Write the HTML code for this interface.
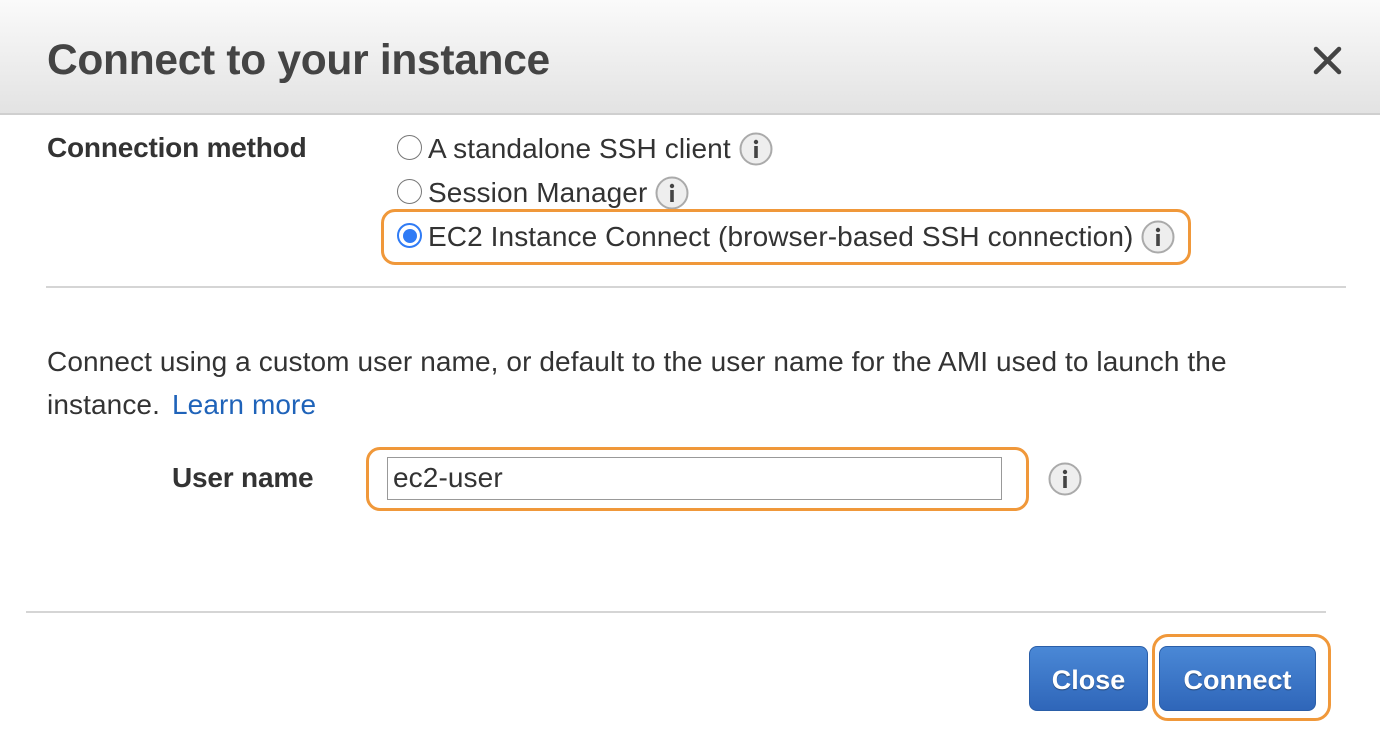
<!DOCTYPE html>
<html><head><meta charset="utf-8"><style>
*{margin:0;padding:0;box-sizing:border-box}
body{width:1380px;height:738px;background:#fff;font-family:"Liberation Sans",Arial,sans-serif;color:#333;position:relative;overflow:hidden}
.hdr{position:absolute;left:0;top:0;width:1380px;height:115px;background:linear-gradient(#fafafa,#e3e3e3);border-bottom:2px solid #cfcfcf}
.t{position:absolute;white-space:nowrap}
.title{left:47px;top:37px;font-size:42.5px;font-weight:bold;color:#444;letter-spacing:-0.3px}
.lbl{font-size:28px;font-weight:bold;color:#333;letter-spacing:-0.2px}
.txt{font-size:28px;color:#333;letter-spacing:0.1px;line-height:32px;display:flex;align-items:center}
.radio{position:absolute;width:25px;height:25px;border-radius:50%;border:1.5px solid #777;background:#fff}
.radio.on{border:2px solid #2f7bf5}
.radio.on::after{content:"";position:absolute;left:3.5px;top:3.5px;width:14px;height:14px;border-radius:50%;background:#2f7bf5}
.info{width:34px;height:34px;flex:none}
.ob{position:absolute;border:3px solid #f0983a;border-radius:14px}
.line{position:absolute;height:2px;background:#d5d5d5}
.btn{position:absolute;top:646px;height:65px;border-radius:8px;background:linear-gradient(#4a88d6,#2f66b9);border:1px solid #2a5ea8;color:#fff;font-weight:bold;font-size:27px;text-align:center;line-height:66px;text-shadow:0 1px 1px rgba(0,0,0,.4)}
</style></head><body>
<div class="hdr"></div>
<div class="t title">Connect to your instance</div>
<svg style="position:absolute;left:1313px;top:46px" width="29" height="29" viewBox="0 0 29 29"><path d="M3 3L26 26M26 3L3 26" stroke="#444" stroke-width="4.5" stroke-linecap="round"/></svg>

<div class="t lbl" style="left:47px;top:132px">Connection method</div>
<div class="radio" style="left:397px;top:135px"></div>
<div class="t txt" style="left:428px;top:132px">A standalone SSH client&nbsp;<svg class="info" viewBox="0 0 34 34"><circle cx="17" cy="17" r="15.5" fill="#eee" stroke="#aaa" stroke-width="2"/><circle cx="17" cy="10" r="2.2" fill="#444"/><rect x="15.2" y="14" width="3.6" height="12" fill="#444"/></svg></div>
<div class="radio" style="left:397px;top:179px"></div>
<div class="t txt" style="left:428px;top:176px">Session Manager&nbsp;<svg class="info" viewBox="0 0 34 34"><circle cx="17" cy="17" r="15.5" fill="#eee" stroke="#aaa" stroke-width="2"/><circle cx="17" cy="10" r="2.2" fill="#444"/><rect x="15.2" y="14" width="3.6" height="12" fill="#444"/></svg></div>
<div class="ob" style="left:381px;top:209px;width:810px;height:56px"></div>
<div class="radio on" style="left:397px;top:223px"></div>
<div class="t txt" style="left:428px;top:220px">EC2 Instance Connect (browser-based SSH connection)&nbsp;<svg class="info" viewBox="0 0 34 34"><circle cx="17" cy="17" r="15.5" fill="#eee" stroke="#aaa" stroke-width="2"/><circle cx="17" cy="10" r="2.2" fill="#444"/><rect x="15.2" y="14" width="3.6" height="12" fill="#444"/></svg></div>

<div class="line" style="left:46px;top:286px;width:1300px"></div>

<div class="t txt" style="left:47px;top:346px">Connect using a custom user name, or default to the user name for the AMI used to launch the</div>
<div class="t txt" style="left:47px;top:389px">instance.<span style="color:#1f63b9;margin-left:12px">Learn more</span></div>

<div class="t lbl" style="left:172px;top:462px">User name</div>
<div class="ob" style="left:366px;top:447px;width:663px;height:64px"></div>
<div style="position:absolute;left:387px;top:457px;width:615px;height:43px;border:1.5px solid #999;background:#fff"></div>
<div class="t txt" style="left:393px;top:462px">ec2-user</div>
<svg class="info" style="position:absolute;left:1048px;top:462px" viewBox="0 0 34 34"><circle cx="17" cy="17" r="15.5" fill="#eee" stroke="#aaa" stroke-width="2"/><circle cx="17" cy="10" r="2.2" fill="#444"/><rect x="15.2" y="14" width="3.6" height="12" fill="#444"/></svg>

<div class="line" style="left:26px;top:611px;width:1300px"></div>

<div class="btn" style="left:1029px;width:119px">Close</div>
<div class="ob" style="left:1152px;top:634px;width:179px;height:87px;border-radius:16px"></div>
<div class="btn" style="left:1159px;width:157px">Connect</div>
</body></html>
